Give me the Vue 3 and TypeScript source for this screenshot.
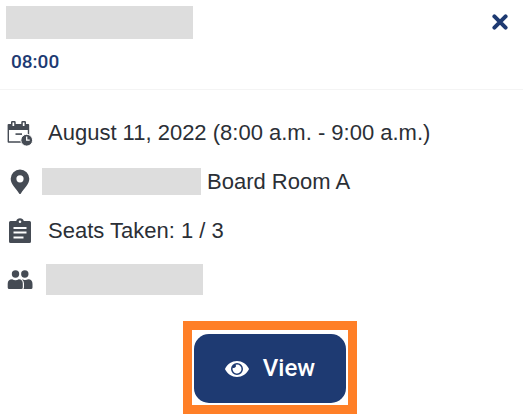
<script setup lang="ts">
import { ref } from 'vue'

interface Booking {
  time: string
  date: string
  room: string
  seats: string
}

const booking: Booking = {
  time: '08:00',
  date: 'August 11, 2022 (8:00 a.m. - 9:00 a.m.)',
  room: 'Board Room A',
  seats: 'Seats Taken: 1 / 3',
}

const open = ref(true)
</script>

<template>
  <article v-if="open" class="card">
    <header class="head">
      <div class="heading">
        <div class="redacted title"></div>
        <time class="time">{{ booking.time }}</time>
      </div>
      <button class="close" type="button" aria-label="Close" @click="open = false">
        <svg width="16" height="16" viewBox="0 0 16 16" fill="none" stroke="currentColor" stroke-width="4" stroke-linecap="round">
          <path d="M2.400 2.400 13.600 13.600M13.600 2.400 2.400 13.600" />
        </svg>
      </button>
    </header>

    <ul class="details">
      <li class="row">
        <svg class="icon" viewBox="0 0 26 26">
          <path fill="currentColor" fill-rule="evenodd" d="M5.200 1h2.300q1.200 0 1.200 1.200V4h5.600V2.200q0-1.200 1.200-1.200h2.300Q19 1 19 2.200V4h2.300q.9 0 .9.900V17h-1.400v-7H2v11.300h12v1.400H1.500q-.9 0-.9-.9V4.900q0-.9.900-.9H4V2.200Q4 1 5.200 1zM5.500 2.500V6h1.700V2.500zM15.800 2.500V6h1.700V2.500z" />
          <path fill="currentColor" d="M8.500 13.300h6.500v1.600H8.500z" />
          <circle cx="19.700" cy="20.200" r="5.900" fill="currentColor" stroke="#fff" stroke-width="1" />
          <path d="M19.700 16.500v3.700h3" fill="none" stroke="#fff" stroke-width="1.300" />
        </svg>
        <span class="text">{{ booking.date }}</span>
      </li>
      <li class="row place">
        <svg class="icon" viewBox="0 0 26 26">
          <path fill="currentColor" fill-rule="evenodd" d="M13 .5a9.300 9.300 0 0 0-9.300 9.300C3.700 15.500 9 19.500 12.100 24.500q.9 1.200 1.800 0C17 19.500 22.300 15.500 22.300 9.800A9.300 9.300 0 0 0 13 .5zm0 5.700a3.600 3.600 0 1 1 0 7.200 3.600 3.600 0 0 1 0-7.200z" />
        </svg>
        <span class="redacted site"></span>
        <span class="text">{{ booking.room }}</span>
      </li>
      <li class="row">
        <svg class="icon" viewBox="0 0 26 26">
          <path fill="currentColor" fill-rule="evenodd" d="M3.500 3H9.200a4 4 0 0 1 7.600 0h5.700q1.500 0 1.500 1.500v19q0 1.500-1.500 1.500h-19Q2 25 2 23.500v-19Q2 3 3.500 3zM13 2.500a1.300 1.300 0 1 0 0 2.600 1.300 1.300 0 0 0 0-2.600zM6.500 9v2h13V9zM6.500 13.500v2h13v-2zM6.500 18.500v2h10v-2z" />
        </svg>
        <span class="text">{{ booking.seats }}</span>
      </li>
      <li class="row people-row">
        <svg class="icon" viewBox="0 0 26 26">
          <g fill="currentColor">
            <circle cx="8.500" cy="7" r="3.700" />
            <circle cx="17.800" cy="7" r="3.700" />
            <path d="M.7 20.500v-3.700q0-4.500 4.500-4.500 3.300 1.800 6.600 0 4 0 4 4.500v3.700q0 1.500-1.500 1.500H2.200Q.7 22 .7 20.500z" />
            <path d="M16 12.500q2.500 1.300 5.200-.2 4.300.2 4.300 4.700v3.500q0 1.500-1.500 1.500h-7.500q.5-.8.500-2v-3.500q0-2.500-2-4z" />
          </g>
        </svg>
        <span class="redacted people"></span>
      </li>
    </ul>

    <footer class="actions">
      <div class="highlight">
        <button class="view" type="button">
          <svg width="24" height="16" viewBox="0 0 24 16">
            <path fill="currentColor" fill-rule="evenodd" d="M12 0C6.800 0 2.800 3 .3 7.200q-.4.800 0 1.600C2.800 13 6.800 16 12 16s9.200-3 11.700-7.200q.4-.8 0-1.600C21.200 3 17.200 0 12 0zm0 2a6 6 0 1 1 0 12 6 6 0 0 1 0-12z" />
            <path fill="currentColor" d="M12 3.500a4.500 4.500 0 1 1-4.300 3.200 2.200 2.200 0 0 0 3-3A4.500 4.500 0 0 1 12 3.500z" />
          </svg>
          <span>View</span>
        </button>
      </div>
    </footer>
  </article>
</template>

<style>
body {
  background: #fff;
}
</style>

<style scoped>
.card {
  color: #2b2f36;
  font-family: "Liberation Sans", Arial, sans-serif;
  font-size: 22px;
  line-height: 25px;
}

.head {
  display: flex;
  justify-content: space-between;
  align-items: flex-start;
  padding: 6px 15px 15px 6px;
  border-bottom: 1px solid #f4f4f4;
}

.redacted {
  flex: none;
  background: #ddd;
}

.title {
  width: 187px;
  height: 33px;
}

.time {
  display: block;
  padding: 11px 0 0 5px;
  color: #1e3a72;
  font: 500 19px/24px Roboto, sans-serif;
}

.close {
  display: flex;
  padding: 8px 0;
  border: 0;
  background: none;
  color: #1e3a72;
  cursor: pointer;
}

.details {
  display: grid;
  grid-auto-rows: 49px;
  margin: 0;
  padding: 18px 7px 17px;
  list-style: none;
}

.row {
  display: flex;
  align-items: center;
  gap: 15px;
}

.place {
  gap: 6px;
}

.people-row {
  gap: 13px;
}

.icon {
  flex: none;
  width: 26px;
  height: 26px;
  color: #454b54;
}

.text {
  white-space: nowrap;
}

.site {
  width: 159px;
  height: 27px;
  margin-left: 3px;
}

.people {
  width: 157px;
  height: 31px;
}

.actions {
  display: flex;
  justify-content: center;
  padding: 0 0 5px 17px;
}

.highlight {
  padding: 4px 2px 2px;
  border: 9px solid #ff7f27;
}

.view {
  display: flex;
  align-items: center;
  gap: 14px;
  padding: 20px 31px;
  border: 0;
  border-radius: 15px;
  background: #1e3a72;
  color: #fff;
  font: 500 24px/29px Roboto, sans-serif;
  cursor: pointer;
}
</style>
